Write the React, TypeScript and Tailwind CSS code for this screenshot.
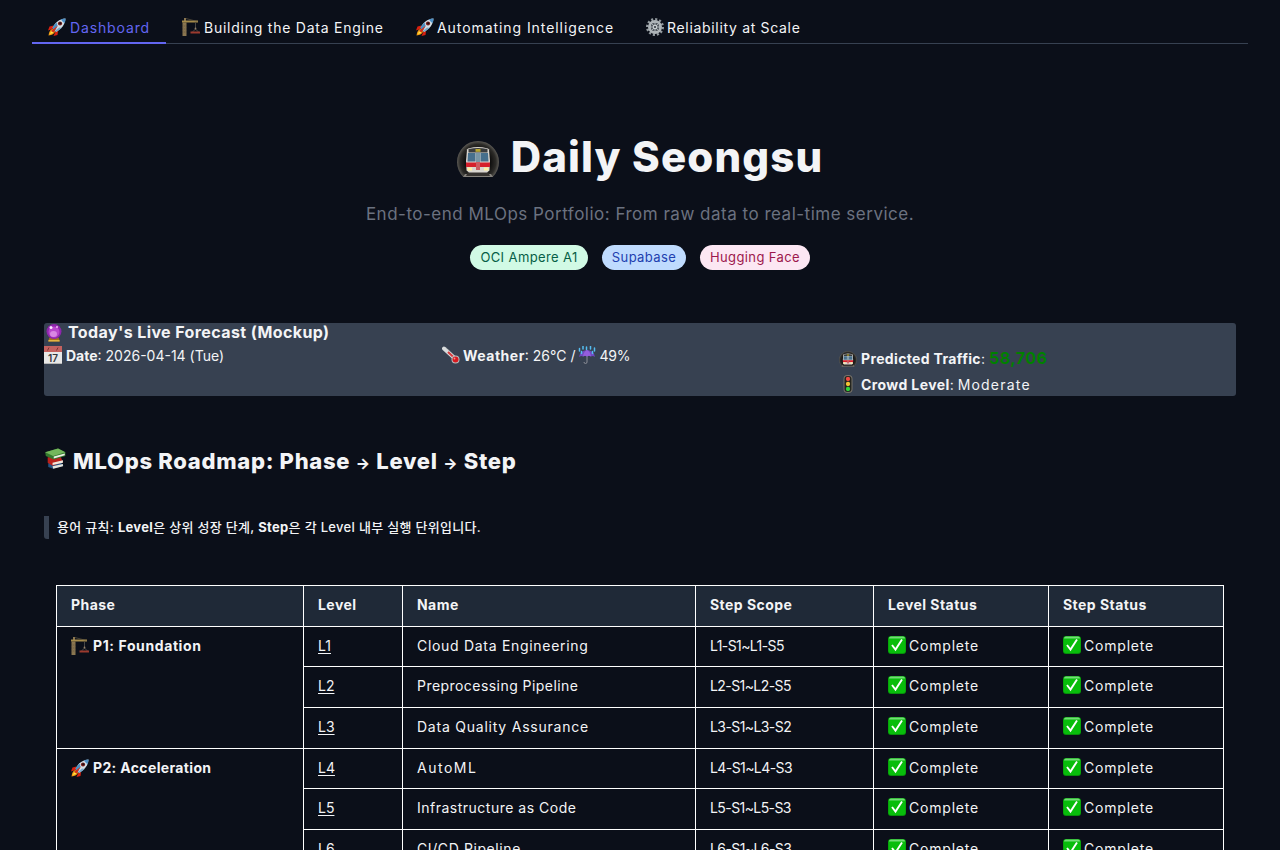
import type { ReactNode } from 'react';

type IconProps = { className?: string };

function RocketIcon({ className = 'size-[18px]' }: IconProps) {
  return (
    <svg viewBox="0 0 36 36" className={`shrink-0 ${className}`} aria-hidden="true">
      <path d="M11 15 3 17 0 25l9-3zM20 26l-1 8-8 2 4-9z" fill="#d9200f" />
      <path d="M9 22c-5 1-7 6-8 13 7-1 12-3 13-8z" fill="#f5a014" />
      <path d="M9 25c-3 1-4 4-5 7 4-1 6-2 7-5z" fill="#ffe84a" />
      <path d="M9 20C14 9 22 2 35 1c-1 13-8 20-19 27z" fill="#d3dfe6" />
      <path d="M26 2.500c3-1 6-1.500 9-1.500 0 3-.5 6-1.500 9-3-1-6-4-7.500-7.500z" fill="#4e91c8" />
      <path d="M9 20c2-5 5-8 8-11l2 6-5 11z" fill="#4a8fc2" />
      <path d="M16 28c5-3 8-5 11-8l-5-1-7 6z" fill="#78a9ca" />
      <circle cx="24" cy="11" r="4.200" fill="#7a1c1a" />
      <circle cx="24.500" cy="10.500" r="2.200" fill="#1c1114" />
      <path d="M6 26 20 15l-9 14z" fill="#d92d18" />
    </svg>
  );
}

function CraneIcon({ className = 'size-[18px]' }: IconProps) {
  return (
    <svg viewBox="0 0 36 36" className={`shrink-0 ${className}`} aria-hidden="true">
      <path d="M4 0h4v6H4zM1 9h8v27H1z" fill="#8a7650" />
      <path d="M0 5h32v4H0z" fill="#a58b4b" />
      <path d="M8 1 31 7" stroke="#6d6349" strokeWidth="1.200" />
      <path d="m2 13 6 6-6 6 6 6M8 13l-6 6 6 6-6 6" fill="none" stroke="#6b5a40" strokeWidth="1" />
      <path d="M27 10v12M20 29l7-7 7 7" fill="none" stroke="#69665f" strokeWidth="1.300" />
      <circle cx="27" cy="21" r="1.800" fill="#98836a" />
      <path d="M17 27h19v4H17z" fill="#9c3a2e" />
    </svg>
  );
}

function GearIcon({ className = 'size-[18px]' }: IconProps) {
  return (
    <svg viewBox="0 0 36 36" className={`shrink-0 ${className}`} aria-hidden="true">
      <circle cx="18" cy="18" r="15.500" fill="none" stroke="#939a9f" strokeWidth="5" strokeDasharray="4.200 3.900" />
      <circle cx="18" cy="18" r="11" fill="none" stroke="#aeb4b8" strokeWidth="6" />
      <circle cx="18" cy="18" r="8" fill="#596067" />
      <path d="M18 9v18M9 18h18M12 12l12 12M24 12 12 24" stroke="#a4abb0" strokeWidth="2" />
      <circle cx="18" cy="18" r="4.500" fill="#c7ccd0" />
      <circle cx="18" cy="18" r="2.200" fill="#353b42" />
    </svg>
  );
}

function MetroIcon({ className = 'size-[18px]' }: IconProps) {
  return (
    <svg viewBox="0 0 42 42" className={`shrink-0 ${className}`} aria-hidden="true">
      <defs>
        <radialGradient id="tunnel" gradientUnits="userSpaceOnUse" cx="21" cy="21" r="21">
          <stop offset="0.5" stopColor="#050505" />
          <stop offset="0.85" stopColor="#2c2b28" />
          <stop offset="1" stopColor="#5a5853" />
        </radialGradient>
      </defs>
      <path d="M6.300 36a21 21 0 1 1 29.400 0z" fill="url(#tunnel)" />
      <path d="M8 33h26l2 3H6z" fill="#85827c" />
      <path d="M11 31h20l2 4H9z" fill="#34312e" />
      <path d="M10 8.500q1-2 11-2.500 10 .5 11 2.500L33 20l-.5 9.500-2.500 2H12l-2.500-2L9 20z" fill="#d9d6d0" />
      <path d="M11.500 8q9.500-2 19 0v3.500h-19z" fill="#3a3c3d" />
      <path d="M18.500 8h5v2.800h-5z" fill="#b7a52e" />
      <path d="M11 12h7.500v8.500h-8zM23.500 12H31l.5 8.500h-8z" fill="#466f8c" />
      <path d="M19 12h4v9h-4z" fill="#7996a5" />
      <path d="M9 21.500h24v4.500H9z" fill="#d5202c" />
      <path d="M19 21h4v8h-4z" fill="#cb5b60" />
      <path d="M10.500 26.500h4.500v3h-4.500zM27 26.500h4.500v3H27z" fill="#fff0a6" />
    </svg>
  );
}

function CrystalBallIcon({ className = 'size-[18px]' }: IconProps) {
  return (
    <svg viewBox="0 0 36 36" className={`shrink-0 ${className}`} aria-hidden="true">
      <path d="M9 27h18l3 8H6z" fill="#a4721d" />
      <path d="M7 32h22v3H7z" fill="#e3b442" />
      <circle cx="18" cy="15" r="15" fill="#8f25ad" />
      <circle cx="18" cy="16" r="11" fill="#b847cc" />
      <ellipse cx="17" cy="20" rx="7" ry="6" fill="#d987e4" />
      <circle cx="12" cy="7" r="3" fill="#fbe5ff" />
      <circle cx="24" cy="6" r="2" fill="#f2bdf7" />
    </svg>
  );
}

function CalendarIcon({ className = 'size-[18px]' }: IconProps) {
  return (
    <svg viewBox="0 0 36 36" className={`shrink-0 ${className}`} aria-hidden="true">
      <path d="M0 0h36v36H0z" fill="#e8e8e7" />
      <path d="M0 0h36v12H0z" fill="#c4625f" />
      <path d="m7 9 3-6M25 9l3-6" stroke="#7d3434" strokeWidth="2" />
      <path d="M0 34h36v2H0z" fill="#b8b8b8" />
      <text x="18" y="31" textAnchor="middle" fontSize="20" fontWeight="600" fontFamily="Inter, sans-serif" fill="#34363a">17</text>
    </svg>
  );
}

function ThermometerIcon({ className = 'size-[18px]' }: IconProps) {
  return (
    <svg viewBox="0 0 36 36" className={`shrink-0 ${className}`} aria-hidden="true">
      <path d="m4 5 22 20" stroke="#d9dbdc" strokeWidth="8" strokeLinecap="round" />
      <path d="m12 12 15 14" stroke="#d83a3d" strokeWidth="4" />
      <path d="m9 4 15 14" stroke="#858a8f" strokeWidth="1.500" strokeDasharray="2 2" />
      <circle cx="27" cy="27" r="8" fill="#b9bdbe" />
      <circle cx="27" cy="27" r="6" fill="#d7191f" />
      <circle cx="25" cy="25" r="1.800" fill="#ff8e89" />
    </svg>
  );
}

function UmbrellaIcon({ className = 'size-[18px]' }: IconProps) {
  return (
    <svg viewBox="0 0 36 36" className={`shrink-0 ${className}`} aria-hidden="true">
      <path d="M18 12v20q0 3-3 3t-3-3" fill="none" stroke="#8b8e96" strokeWidth="2" />
      <path d="M2 22Q4 9 18 8q14 1 16 14-4-3-8-1-4-3-8 0-4-3-8 0-4-2-8 1z" fill="#704ac1" />
      <path d="M10 21q1-10 8-13 7 3 8 13-4-3-8 0-4-3-8 0z" fill="#955ddd" />
      <path d="M3 5v5M10 0v6M17 2v5M25 0v6M33 4v6M7 11v4M29 11v4" stroke="#54bdf0" strokeWidth="3" strokeLinecap="round" />
    </svg>
  );
}

function TrafficLightIcon({ className = 'size-[18px]' }: IconProps) {
  return (
    <svg viewBox="0 0 36 36" className={`shrink-0 ${className}`} aria-hidden="true">
      <rect x="9" y="0" width="18" height="36" rx="8" fill="#77736a" />
      <rect x="11" y="2" width="14" height="32" rx="6" fill="#23241f" />
      <circle cx="18" cy="8" r="4.300" fill="#f04a43" />
      <circle cx="18" cy="18" r="4.300" fill="#f4c435" />
      <circle cx="18" cy="28" r="4.300" fill="#31d63c" />
    </svg>
  );
}

function BooksIcon({ className = 'size-[22px]' }: IconProps) {
  return (
    <svg viewBox="0 0 36 36" className={`shrink-0 ${className}`} aria-hidden="true">
      <path d="m7 25 18-4 7 8-17 5-8-3z" fill="#255384" />
      <path d="m14 30 17-4v4l-16 4z" fill="#e6e4dc" />
      <path d="m6 15 21-1 4 9-17 6-8-5z" fill="#ba211b" />
      <path d="m14 24 17-4v4l-17 4z" fill="#f1e7dc" />
      <path d="m2 7 21-6 12 6v6l-19 6L3 13z" fill="#347a2e" />
      <path d="m2 7 21-6 12 6-20 6z" fill="#74b75b" />
      <path d="m16 14 18-5v3l-18 5z" fill="#edf0e4" />
    </svg>
  );
}

function CheckIcon({ className = 'size-[18px]' }: IconProps) {
  return (
    <svg viewBox="0 0 36 36" className={`shrink-0 ${className}`} aria-hidden="true">
      <rect width="36" height="36" rx="6" fill="#078e0b" />
      <rect x="1" y="1" width="34" height="33" rx="5" fill="#08bd0b" />
      <path d="M6 1h24q4 0 4 4H2q0-4 4-4z" fill="#73dc76" />
      <path d="m8 18 7 9L28 7" fill="none" stroke="#fff" strokeWidth="3.800" />
    </svg>
  );
}

const TABS = [
  { label: 'Dashboard', icon: RocketIcon, className: 'w-[134px] gap-1 border-b-2 border-[#6366f1] text-[#6366f1] tracking-[0.87px]' },
  { label: 'Building the Data Engine', icon: CraneIcon, className: 'w-[234px] gap-1 tracking-[0.76px]' },
  { label: 'Automating Intelligence', icon: RocketIcon, className: 'w-[230px] gap-[3px] tracking-[0.93px]' },
  { label: 'Reliability at Scale', icon: GearIcon, className: 'w-[186px] gap-[3px] tracking-[0.68px]' },
];

const LEVELS = [
  { level: 'L1', name: 'Cloud Data Engineering', scope: 'L1-S1~L1-S5', height: 'h-[40px]', tracking: 'tracking-[0.7px]' },
  { level: 'L2', name: 'Preprocessing Pipeline', scope: 'L2-S1~L2-S5', height: 'h-[41px]', tracking: 'tracking-[0.45px]' },
  { level: 'L3', name: 'Data Quality Assurance', scope: 'L3-S1~L3-S2', height: 'h-[41px]', tracking: 'tracking-[0.77px]' },
  { level: 'L4', name: 'AutoML', scope: 'L4-S1~L4-S3', height: 'h-[40px]', tracking: 'tracking-[1.5px]' },
  { level: 'L5', name: 'Infrastructure as Code', scope: 'L5-S1~L5-S3', height: 'h-[41px]', tracking: 'tracking-[0.5px]' },
  { level: 'L6', name: 'CI/CD Pipeline', scope: 'L6-S1~L6-S3', height: 'h-[41px]', tracking: 'tracking-[0.6px]' },
];

const PHASES: Record<string, { label: string; icon: ReactNode; tracking: string }> = {
  L1: { label: 'P1: Foundation', icon: <CraneIcon />, tracking: 'tracking-[0.6px]' },
  L4: { label: 'P2: Acceleration', icon: <RocketIcon />, tracking: 'tracking-[0.35px]' },
};

const HEADERS = ['Phase', 'Level', 'Name', 'Step Scope', 'Level Status', 'Step Status'];

const CELL = 'border border-white px-3.5 pt-0 pb-0.5';

function Status() {
  return (
    <span className="flex items-center gap-[3px] tracking-[0.8px]">
      <CheckIcon className="-mt-0.5 size-[18px]" />
      Complete
    </span>
  );
}

function RoadmapTable() {
  return (
    <table className="ml-3 mt-[46px] w-[1168px] table-fixed border-collapse text-left text-sm leading-5">
      <colgroup>
        <col className="w-[247px]" />
        <col className="w-[99px]" />
        <col className="w-[293px]" />
        <col className="w-[178px]" />
        <col className="w-[175px]" />
        <col className="w-[175px]" />
      </colgroup>
      <thead>
        <tr className="h-[41px] bg-[#1f2937]">
          {HEADERS.map((header) => (
            <th key={header} className={`${CELL} font-bold tracking-[0.45px]`}>{header}</th>
          ))}
        </tr>
      </thead>
      <tbody>
        {LEVELS.map(({ level, name, scope, height, tracking }) => (
          <tr key={level} className={height}>
            {PHASES[level] && (
              <td rowSpan={3} className="border border-white px-3.5 pt-[9px] align-top font-bold">
                <span className={`flex items-center gap-1 ${PHASES[level].tracking}`}>
                  {PHASES[level].icon}
                  {PHASES[level].label}
                </span>
              </td>
            )}
            <td className={CELL}><a href="#" className="underline underline-offset-2">{level}</a></td>
            <td className={`${CELL} ${tracking}`}>{name}</td>
            <td className={`${CELL} tracking-[-0.58px]`}>{scope}</td>
            <td className={CELL}><Status /></td>
            <td className={CELL}><Status /></td>
          </tr>
        ))}
      </tbody>
    </table>
  );
}

export default function App() {
  return (
    <div className="h-[850px] w-[1280px] overflow-hidden whitespace-nowrap bg-[#0b0f19] px-8 font-['Inter','Noto_Sans_CJK_KR',sans-serif] text-sm text-[#f3f4f6]">
      <nav className="flex h-11 border-b border-[#374151]">
        {TABS.map(({ label, icon: Icon, className }) => (
          <button key={label} type="button" className={`flex h-11 items-start px-4 pt-[18px] leading-5 ${className}`}>
            <Icon />
            {label}
          </button>
        ))}
      </nav>

      <main className="px-3">
        <header className="flex flex-col items-center pt-[88px]">
          <h1 className="flex h-[50px] items-center gap-3 text-[42px] font-extrabold tracking-[1.15px]">
            <MetroIcon className="mt-2.5 size-[42px]" />
            Daily Seongsu
          </h1>
          <p className="mt-5 text-[17px] leading-6 tracking-[0.5px] text-[#6b7280]">
            End-to-end MLOps Portfolio: From raw data to real-time service.
          </p>
          <div className="mt-[19px] flex gap-3.5 text-[13px] leading-[25px] tracking-[0.38px]">
            <span className="w-[118px] rounded-full bg-[#d1fae5] text-center text-[#065f46]">OCI Ampere A1</span>
            <span className="w-[84px] rounded-full bg-[#bfdbfe] text-center text-[#1e40af]">Supabase</span>
            <span className="w-[110px] rounded-full bg-[#fce7f3] text-center text-[#9d174d]">Hugging Face</span>
          </div>
        </header>

        <section className="mt-[53px] h-[73px] rounded-[3px] bg-[#374151]">
          <h3 className="flex h-[19px] items-center gap-[5px] text-base font-bold tracking-[0.4px]">
            <CrystalBallIcon className="ml-px size-[18px]" />
            <span className="-mt-0.5">Today's Live Forecast (Mockup)</span>
          </h3>
          <div className="grid grid-cols-[398px_397px_1fr]">
            <p className="flex h-7 items-center gap-1">
              <CalendarIcon className="-mt-0.5 size-[18px]" />
              <span><b>Date</b>: 2026-04-14 (Tue)</span>
            </p>
            <p className="flex h-7 items-center gap-[3px]">
              <ThermometerIcon className="-mt-0.5 size-[18px]" />
              <span><b className="tracking-[0.5px]">Weather</b>: 26°C /</span>
              <UmbrellaIcon className="-mt-0.5 size-[18px]" />
              <span className="tracking-[-0.2px]">49%</span>
            </p>
            <div>
              <p className="flex h-8 items-center gap-1">
                <MetroIcon className="mt-1 size-[18px]" />
                <span className="leading-5">
                  <b className="tracking-[0.35px]">Predicted Traffic</b>: <b className="text-base leading-5 tracking-[0.5px] text-[#008000]">58,706</b>
                </span>
              </p>
              <p className="mt-0.5 flex h-[18px] items-center gap-1">
                <TrafficLightIcon className="-mt-0.5 size-[18px]" />
                <span><b className="tracking-[0.4px]">Crowd Level</b>: <span className="tracking-[1.2px]">Moderate</span></span>
              </p>
            </div>
          </div>
        </section>

        <h2 className="mt-[50px] flex h-[30px] items-center gap-[7px] text-[22px] font-extrabold tracking-[0.7px]">
          <BooksIcon className="-mt-1 size-[22px]" />
          <span className="mt-0.5">
            MLOps Roadmap: Phase <span className="text-[15px]">→</span> Level <span className="text-[15px]">→</span> Step
          </span>
        </h2>

        <blockquote className="mt-10 h-[23px] rounded-bl-[3px] border-l-[5px] border-[#374151] pl-2 text-[13px] font-medium leading-[23px] tracking-[0.31px]">
          용어 규칙: <b>Level</b>은 상위 성장 단계, <b>Step</b>은 각 Level 내부 실행 단위입니다.
        </blockquote>

        <RoadmapTable />
      </main>
    </div>
  );
}
